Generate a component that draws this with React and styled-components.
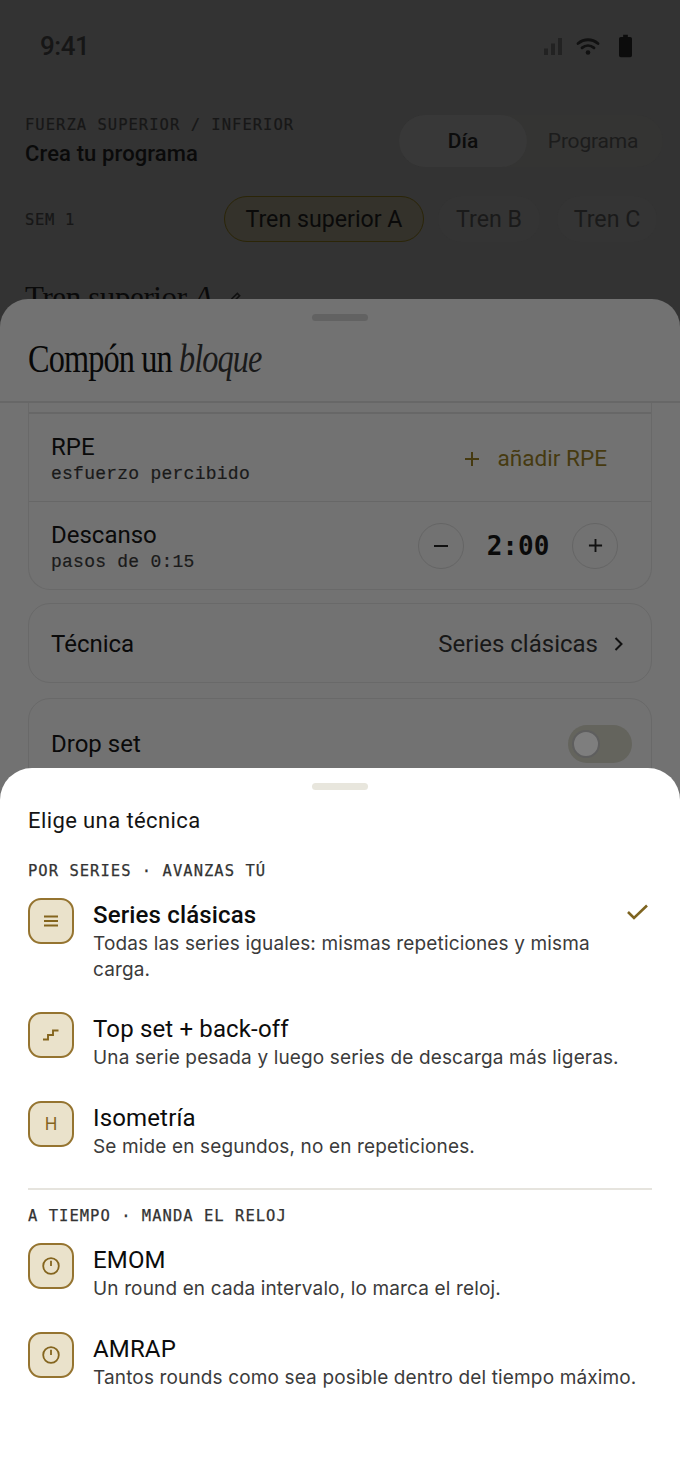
import React from "react";
import styled, { createGlobalStyle } from "styled-components";

const Global = createGlobalStyle`
  html, body { margin: 0; padding: 0; background: #333333; }
  * { box-sizing: border-box; }
`;
const sans = `Roboto, "Liberation Sans", sans-serif`;
const body = `Inter, Roboto, sans-serif`;
const mono = `"DejaVu Sans Mono", "Liberation Mono", monospace`;
const serif = `"Liberation Serif", serif`;

const Screen = styled.div`
  position: relative; width: 680px; height: 1477px; overflow: hidden;
  background: #333333; font-family: ${sans}; color: #121212;
`;
const Base = styled.div`
  padding: 0 17px 0 25px;
`;
const StatusBar = styled.div`
  display: flex; justify-content: space-between; align-items: center;
  height: 92px; padding: 0 31px 0 15px;
`;
const Time = styled.span`
  font-size: 26px; font-weight: 500; letter-spacing: -0.5px; color: #161616;
`;
const StatusIcons = styled.div`display: flex; align-items: center;`;
const StatusSlot = styled.span`display: flex; margin-left: ${p => p.$ml}px;`;
const TopRow = styled.div`
  display: flex; justify-content: space-between; align-items: flex-start; height: 74px; padding-top: 22px;
`;
const Eyebrow = styled.div`
  font-family: ${mono}; font-size: 15.5px; line-height: 20px; letter-spacing: 1.02px; color: #171717;
  -webkit-text-stroke: 0.2px #171717; padding-top: 1px;
`;
const AppTitle = styled.div`
  font-size: 22px; font-weight: 500; line-height: 30px; margin-top: 4px; letter-spacing: 0.12px; color: #0a0a0a;
`;
const Segment = styled.div`
  display: flex; width: 264px; height: 52px; margin: 1px 0 0; border-radius: 26px; background: #343433;
`;
const SegmentItem = styled.div`
  display: flex; align-items: center; justify-content: center; border-radius: 26px;
  width: ${p => (p.$active ? "128px" : "132px")};
  background: ${p => (p.$active ? "#383838" : "transparent")};
  color: ${p => (p.$active ? "#0c0c0c" : "#1c1c1c")};
  font-size: 21px; letter-spacing: ${p => (p.$active ? "0" : "-0.2px")}; font-weight: ${p => (p.$active ? 500 : 400)};
`;
const ChipRow = styled.div`
  display: flex; align-items: center; height: 46px; margin-top: 30px; padding-right: 6px;
`;
const WeekLabel = styled.div`
  font-family: ${mono}; font-size: 15.5px; letter-spacing: 0.67px; color: #171717; margin-right: auto;
  -webkit-text-stroke: 0.2px #171717; padding-top: 2px;
`;
const Chip = styled.div`
  display: flex; align-items: center; justify-content: center; height: 46px; border-radius: 23px;
  width: ${p => p.$w}px; margin-left: ${p => p.$ml}px; font-size: 23.2px;
  border: 1.5px solid ${p => (p.$active ? "#2b2507" : "transparent")};
  background: ${p => (p.$active ? "#34322b" : "#343434")};
  color: ${p => (p.$active ? "#0a0a0a" : "#1a1a1a")};
`;
const DayHeading = styled.div`
  display: flex; align-items: center; gap: 16px; margin-top: 36px;
  font-family: ${serif}; font-size: 31px; line-height: 40px; letter-spacing: -0.4px; color: #0a0a0a;
`;

const Sheet = styled.div`
  position: absolute; left: 0; right: 0; top: 299px; bottom: 0;
  background: #727272; border-radius: 28px 28px 0 0; display: flex; flex-direction: column;
`;
const Grabber = styled.div`
  width: ${p => p.$w}px; height: 7px; border-radius: 4px; margin: 0 auto; background: ${p => p.$c};
`;
const SheetHeader = styled.div`
  height: 104px; padding-top: 15px; border-bottom: 2px solid #676767; flex: none;
`;
const SheetTitle = styled.h2`
  margin: 14px 0 0 28px; font-family: ${serif}; font-weight: 400; font-size: 40px; line-height: 48px;
  letter-spacing: -1.1px; color: #080808; transform-origin: left center; transform: scaleX(0.808);
  white-space: nowrap; em { color: #1a1a1a; }
`;
const Scroll = styled.div`
  flex: 1; overflow: hidden; padding: 0 28px; display: flex; flex-direction: column; gap: 13px;
`;
const Card = styled.div`
  border: 1.5px solid #696969; border-radius: ${p => (p.$clipped ? "0 0 22px 22px" : "22px")};
  ${p => p.$clipped && "border-top: none;"}
  ${p => p.$gapTop && `margin-top: ${p.$gapTop}px;`}
`;
const CutRow = styled.div`height: 11px; border-bottom: 2px solid #676767;`;
const Row = styled.div`
  display: flex; align-items: center; justify-content: space-between;
  padding: ${p => p.$pt || 0}px ${p => p.$pr || 22}px 0 22px;
  height: ${p => p.$h}px;
  & + & { border-top: 1.5px solid #676767; }
`;
const RowText = styled.div`padding-top: 2px;`;
const RowTitle = styled.div`font-size: 24px; line-height: 28px; color: #0a0a0a;`;
const RowSub = styled.div`
  font-family: "Liberation Mono", monospace; font-size: 18px; line-height: 22px; letter-spacing: 0.25px; color: #1a1a1a;
  margin-top: 2px; -webkit-text-stroke: 0.2px #1a1a1a;
`;
const AddLink = styled.div`
  display: flex; align-items: center; gap: 17px; padding-right: 22px; padding-top: 2px;
  font-size: 22.6px; color: #463a10;
`;
const Stepper = styled.div`display: flex; align-items: center;`;
const StepButton = styled.div`
  width: 46px; height: 46px; border-radius: 50%; border: 1.5px solid #656565;
  display: flex; align-items: center; justify-content: center;
`;
const StepValue = styled.div`
  width: 108px; text-align: center; font-family: ${mono}; font-weight: 700; font-size: 26px; color: #0a0a0a;
`;
const TechValue = styled.div`
  display: flex; align-items: center; gap: 16px; font-size: 24px; color: #181818; padding-right: 6px;
`;
const Toggle = styled.div`
  width: 64px; height: 38px; border-radius: 19px; background: #64645d; padding: 5px 0 0 4px;
`;
const Knob = styled.div`
  width: 28px; height: 28px; border-radius: 50%; background: #7e7e7e; border: 2px solid #5e5e5e;
`;

const Picker = styled.div`
  position: absolute; left: 0; right: 0; top: 768px; bottom: 0;
  background: #fff; border-radius: 32px 32px 0 0; padding: 15px 28px 0;
`;
const PickerTitle = styled.div`
  margin-top: 16px; font-size: 22px; line-height: 30px; color: #141414; letter-spacing: 0.4px;
`;
const GroupLabel = styled.div`
  font-family: ${mono}; font-size: 15.5px; line-height: 20px; letter-spacing: 1.02px; color: #333;
  -webkit-text-stroke: 0.25px #333; margin-top: ${p => p.$mt}px;
`;
const Option = styled.div`
  display: flex; align-items: flex-start; margin-top: ${p => p.$mt}px;
`;
const IconBox = styled.div`
  width: 46px; height: 46px; flex: none; border-radius: 13px; border: 2px solid #957430;
  background: #eae2cb; color: #84651e; display: flex; align-items: center; justify-content: center;
  font-family: ${body}; font-size: 17px; font-weight: 400; margin-right: 19px;
`;
const OptionBody = styled.div`flex: 1; min-width: 0; padding-top: 2px;`;
const OptionTitle = styled.div`
  font-size: 24px; line-height: 30px; letter-spacing: 0.15px; color: #0c0c0c; font-weight: ${p => (p.$sel ? 500 : 400)};
`;
const OptionDesc = styled.div`
  font-family: ${body}; font-size: 19px; line-height: 26px; color: #3b3b3b; letter-spacing: 0.14px;
  margin-top: 1px;
`;
const Check = styled.div`flex: none; margin: 5px 2px 0 -8px;`;
const Rule = styled.div`height: 2px; background: #e6e4de; margin-top: 28px;`;

const Bars = () => (
  <svg width="18" height="17" viewBox="0 0 18 17"><path d="M0 10.500h4V17H0zM7 5.500h4V17H7zM14 0h4v17h-4z" fill="#222" /></svg>
);
const Wifi = () => (
  <svg width="24" height="17" viewBox="0 0 24 17" fill="none" stroke="#111" strokeWidth="2.800" strokeLinecap="round">
    <path d="M2 5.500c6-5 14-5 20 0M6 9.800c3.600-3 8.400-3 12 0" />
    <circle cx="12" cy="14.500" r="2.300" fill="#111" stroke="none" />
  </svg>
);
const Battery = () => (
  <svg width="13" height="24" viewBox="0 0 14 24"><path d="M4.500 0h5v2.200H12a2 2 0 0 1 2 2V22a2 2 0 0 1-2 2H2a2 2 0 0 1-2-2V4.200a2 2 0 0 1 2-2h2.500z" fill="#0c0c0c" /></svg>
);
const Pencil = () => (
  <svg width="14" height="16" viewBox="0 0 18 18" fill="none" stroke="#111" strokeWidth="2"><path d="M3 15l2-5 7-7 3 3-7 7z" /></svg>
);
const Plus = ({ c = "#463a10", s = 16 }) => (
  <svg width={s} height={s} viewBox="0 0 16 16" stroke={c} strokeWidth="2"><path d="M8 1v14M1 8h14" /></svg>
);
const Minus = () => (
  <svg width="14" height="14" viewBox="0 0 14 14" stroke="#111" strokeWidth="2"><path d="M0 7h14" /></svg>
);
const Chevron = () => (
  <svg width="9" height="16" viewBox="0 0 9 16" fill="none" stroke="#111" strokeWidth="2"><path d="M1.500 2l6 6-6 6" /></svg>
);
const Lines = () => (
  <svg width="14" height="12" viewBox="0 0 14 12" stroke="currentColor" strokeWidth="1.900"><path d="M0 1.500h14M0 6h14M0 10.500h14" /></svg>
);
const Stairs = () => (
  <svg width="16" height="12" viewBox="0 0 16 12" fill="none" stroke="currentColor" strokeWidth="1.900"><path d="M0 10.500h5V6h5V1.500h5.500" /></svg>
);
const Clock = () => (
  <svg width="18" height="18" viewBox="0 0 18 18" fill="none" stroke="currentColor" strokeWidth="1.800"><circle cx="9" cy="9" r="7.800" /><path d="M9 3.800V9" /></svg>
);
const CheckMark = () => (
  <svg width="24" height="18" viewBox="0 0 24 18" fill="none" stroke="#7e6420" strokeWidth="2.600"><path d="M2 9l6 6L21 2.500" /></svg>
);

export default function App() {
  return (
    <Screen>
      <Global />
      <Base>
        <StatusBar>
          <Time>9:41</Time>
          <StatusIcons>
            <StatusSlot $ml={0}><Bars /></StatusSlot>
            <StatusSlot $ml={14}><Wifi /></StatusSlot>
            <StatusSlot $ml={19}><Battery /></StatusSlot>
          </StatusIcons>
        </StatusBar>
        <TopRow>
          <div>
            <Eyebrow>FUERZA SUPERIOR / INFERIOR</Eyebrow>
            <AppTitle>Crea tu programa</AppTitle>
          </div>
          <Segment>
            <SegmentItem $active>Día</SegmentItem>
            <SegmentItem>Programa</SegmentItem>
          </Segment>
        </TopRow>
        <ChipRow>
          <WeekLabel>SEM 1</WeekLabel>
          <Chip $active $w={200} $ml={0}>Tren superior A</Chip>
          <Chip $w={102} $ml={14}>Tren B</Chip>
          <Chip $w={100} $ml={17}>Tren C</Chip>
        </ChipRow>
        <DayHeading>
          <span>Tren superior <em>A</em></span>
          <Pencil />
        </DayHeading>
      </Base>

      <Sheet>
        <SheetHeader>
          <Grabber $w={56} $c="#626262" />
          <SheetTitle>Compón un <em>bloque</em></SheetTitle>
        </SheetHeader>
        <Scroll>
          <Card $clipped>
            <CutRow />
            <Row $h={87}>
              <RowText>
                <RowTitle>RPE</RowTitle>
                <RowSub>esfuerzo percibido</RowSub>
              </RowText>
              <AddLink><Plus />añadir RPE</AddLink>
            </Row>
            <Row $h={88} $pr={33}>
              <RowText>
                <RowTitle>Descanso</RowTitle>
                <RowSub>pasos de 0:15</RowSub>
              </RowText>
              <Stepper>
                <StepButton><Minus /></StepButton>
                <StepValue>2:00</StepValue>
                <StepButton><Plus c="#111" s={15} /></StepButton>
              </Stepper>
            </Row>
          </Card>
          <Card>
            <Row $h={78} $pt={2}>
              <RowTitle>Técnica</RowTitle>
              <TechValue>Series clásicas <Chevron /></TechValue>
            </Row>
          </Card>
          <Card $gapTop={2}>
            <Row $h={90} $pr={19}>
              <RowTitle>Drop set</RowTitle>
              <Toggle><Knob /></Toggle>
            </Row>
          </Card>
        </Scroll>
      </Sheet>

      <Picker>
        <Grabber $w={56} $c="#e8e6dd" />
        <PickerTitle>Elige una técnica</PickerTitle>
        <GroupLabel $mt={25}>POR SERIES · AVANZAS TÚ</GroupLabel>
        <Option $mt={17}>
          <IconBox><Lines /></IconBox>
          <OptionBody>
            <OptionTitle $sel>Series clásicas</OptionTitle>
            <OptionDesc>Todas las series iguales: mismas repeticiones y misma carga.</OptionDesc>
          </OptionBody>
          <Check><CheckMark /></Check>
        </Option>
        <Option $mt={29}>
          <IconBox><Stairs /></IconBox>
          <OptionBody>
            <OptionTitle>Top set + back-off</OptionTitle>
            <OptionDesc>Una serie pesada y luego series de descarga más ligeras.</OptionDesc>
          </OptionBody>
        </Option>
        <Option $mt={30}>
          <IconBox>H</IconBox>
          <OptionBody>
            <OptionTitle>Isometría</OptionTitle>
            <OptionDesc>Se mide en segundos, no en repeticiones.</OptionDesc>
          </OptionBody>
        </Option>
        <Rule />
        <GroupLabel $mt={16}>A TIEMPO · MANDA EL RELOJ</GroupLabel>
        <Option $mt={17}>
          <IconBox><Clock /></IconBox>
          <OptionBody>
            <OptionTitle>EMOM</OptionTitle>
            <OptionDesc>Un round en cada intervalo, lo marca el reloj.</OptionDesc>
          </OptionBody>
        </Option>
        <Option $mt={30}>
          <IconBox><Clock /></IconBox>
          <OptionBody>
            <OptionTitle>AMRAP</OptionTitle>
            <OptionDesc>Tantos rounds como sea posible dentro del tiempo máximo.</OptionDesc>
          </OptionBody>
        </Option>
      </Picker>
    </Screen>
  );
}
